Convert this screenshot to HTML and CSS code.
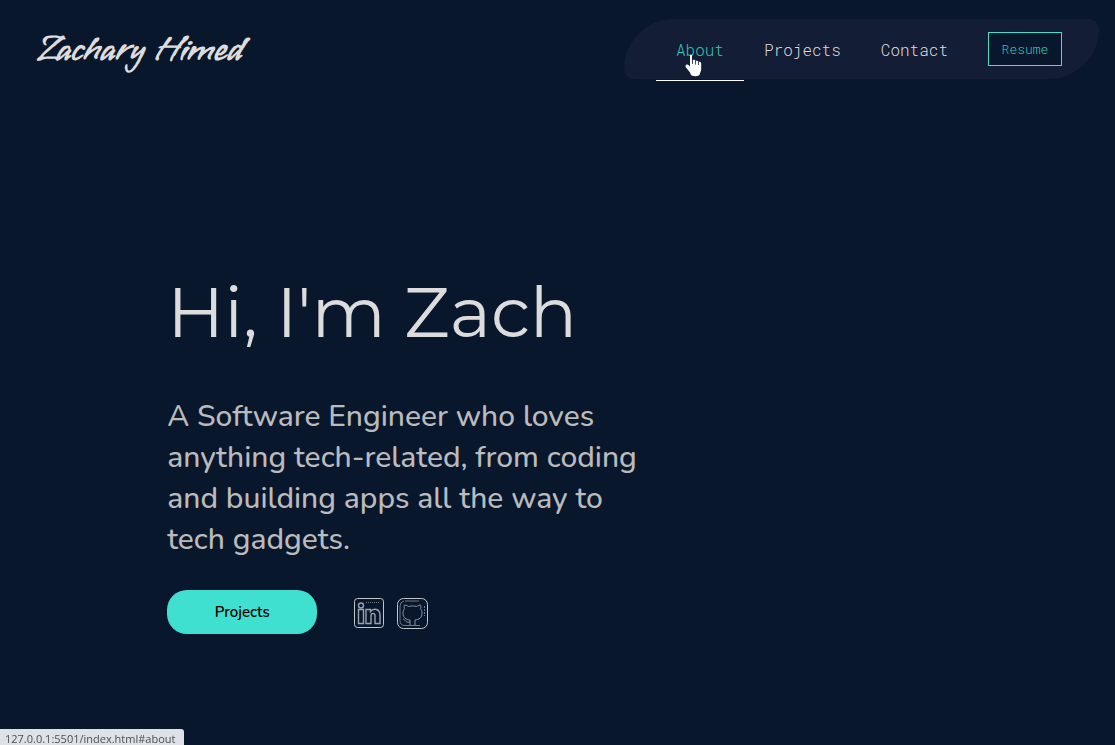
FILE: index.html
```html
<!DOCTYPE html>
<html lang="en">
<head>
<meta charset="utf-8">
<meta name="viewport" content="width=device-width, initial-scale=1">
<title>Zachary Himed</title>
<link rel="stylesheet" href="styles.css">
</head>
<body>
<header class="header">
  <a class="logo" href="#home">Zachary Himed</a>
  <nav class="nav">
    <a class="nav-link active" href="#about">About
      <svg class="pointer" viewBox="0 0 17 23" aria-hidden="true"><path fill="#fff" d="M5 1.500C5 0 7 0 7 1.500V6.500c1-1 3-.8 3.500.500 1-.7 2.500-.3 2.800.9 1.200-.5 2.900.2 2.900 1.600V15c0 2-.8 3-1.300 4.500V20c-1 3-8 3-9.500 0v-1L1 13.500C-.5 11.500 1.500 9.500 3.500 11L5 12.500z"/><path stroke="#131d35" stroke-width=".8" d="M7.500 6v4M10.500 7v3.500M13.500 8v3"/></svg>
    </a>
    <a class="nav-link" href="#projects">Projects</a>
    <a class="nav-link" href="#contact">Contact</a>
    <button class="resume" type="button">Resume</button>
  </nav>
</header>
<main class="hero">
  <h1 class="title">Hi, I'm Zach</h1>
  <p class="intro">A Software Engineer who loves<br>anything tech-related, from coding<br>and building apps all the way to<br>tech gadgets.</p>
  <div class="actions">
    <button class="projects" type="button">Projects</button>
    <div class="socials">
      <a class="social" href="#linkedin" aria-label="LinkedIn">
        <svg viewBox="0 0 32 32" fill="none" stroke="#c3c7cc" aria-hidden="true">
          <rect x="1.500" y="1.500" width="29" height="29" rx="3"/>
          <g stroke="#9aa2aa" stroke-width="1.400">
            <circle cx="8" cy="8.500" r="2.500"/>
            <path d="M5.500 12.500h5v14h-5zM13 12.500h4.500v2c3-4 9.500-2.500 9.500 3.500v8.500h-5V19c0-3.500-4-3.500-4 0v7.500h-5z"/>
          </g>
          <path d="M13 5.500h14" stroke="#6f7985" stroke-dasharray="1 1"/>
        </svg>
      </a>
      <a class="social" href="#github" aria-label="GitHub">
        <svg viewBox="0 0 32 32" fill="none" stroke="#c3c7cc" aria-hidden="true">
          <rect x="1.500" y="1.500" width="30" height="30" rx="6"/>
          <path stroke="#6f7985" d="M9 4h14M24 28.500H9q-5 0-5-5V9q0-4 4-5"/>
          <path stroke="#6f7985" stroke-dasharray="2 1" d="M28.500 9v10"/>
          <path stroke="#8d959e" d="M14 28v-5c-4-.5-7-2-7-7 0-2 1-3.500 1.500-4.500-.7-2-.3-3 0-3.500 2 0 3 1 4 1.500 3-.7 5-.7 8 0 1-.5 2-1.500 4-1.500.5 1 .5 2.500 0 3.500C25.500 13 26 14 26 16c0 5-3 6.500-7 7v5M14 25c-5 1-4-2-7-3"/>
        </svg>
      </a>
    </div>
  </div>
</main>
<div class="status">127.0.0.1:5501/index.html#about</div>
</body>
</html>
```
FILE: styles.css
```css
* { box-sizing: border-box; }
body {
  margin: 0;
  min-height: 100vh;
  background: #09172d;
  color: #dcdcdc;
  font-family: Nunito, Lato, sans-serif;
}
a { color: inherit; text-decoration: none; }
button { cursor: pointer; }
.header {
  display: flex;
  justify-content: space-between;
  align-items: flex-start;
  padding: 19px 16px 0 37px;
}
.logo {
  font: 700 35px/62px "Vujahday Script", Hurricane, cursive;
}
.nav {
  display: flex;
  align-items: center;
  height: 60px;
  padding: 0 37px 0 32px;
  border-radius: 50px 10px;
  background: #131d35;
  font: 300 16px "Roboto Mono", "Liberation Mono", monospace;
}
.nav-link {
  position: relative;
  padding: 2px 20px 0;
  line-height: 60px;
}
.active { color: #2cc9b8; }
.active::after {
  content: "";
  position: absolute;
  left: 0;
  right: 0;
  bottom: -1px;
  height: 1px;
  background: #fff;
}
.pointer {
  position: absolute;
  left: 29px;
  top: 36px;
  width: 17px;
  height: 23px;
}
.resume {
  width: 74px;
  height: 34px;
  margin-left: 20px;
  padding: 0;
  border: 1px solid #40e0d0;
  background: #09172d;
  color: #2cc9b8;
  font: 300 13px "Roboto Mono", "Liberation Mono", monospace;
}
.hero { padding: 188px 16px 0 15%; }
.title {
  margin: 0;
  font: 400 70px/86px Montserrat, Inter, sans-serif;
}
.intro {
  margin: 41px 0 0;
  color: #bbb;
  font-size: 30px;
  font-weight: 500;
  line-height: 41px;
}
.actions {
  display: flex;
  align-items: center;
  margin-top: 30px;
}
.projects {
  width: 150px;
  height: 44px;
  margin-right: 36px;
  border: 0;
  border-radius: 20px;
  background: #40e0d0;
  color: #000;
  font: 600 15px Nunito, Lato, sans-serif;
}
.socials {
  display: flex;
  gap: 11px;
  padding-top: 2px;
}
.social { height: 32px; }
.social svg { width: 32px; height: 32px; }
.status {
  position: fixed;
  left: 0;
  bottom: 0;
  height: 16px;
  padding: 0 9px 0 5px;
  border-top-right-radius: 3px;
  background: #dee1e6;
  color: #4b4f55;
  font: 11px/20px "Open Sans", "Noto Sans", sans-serif;
}
```
